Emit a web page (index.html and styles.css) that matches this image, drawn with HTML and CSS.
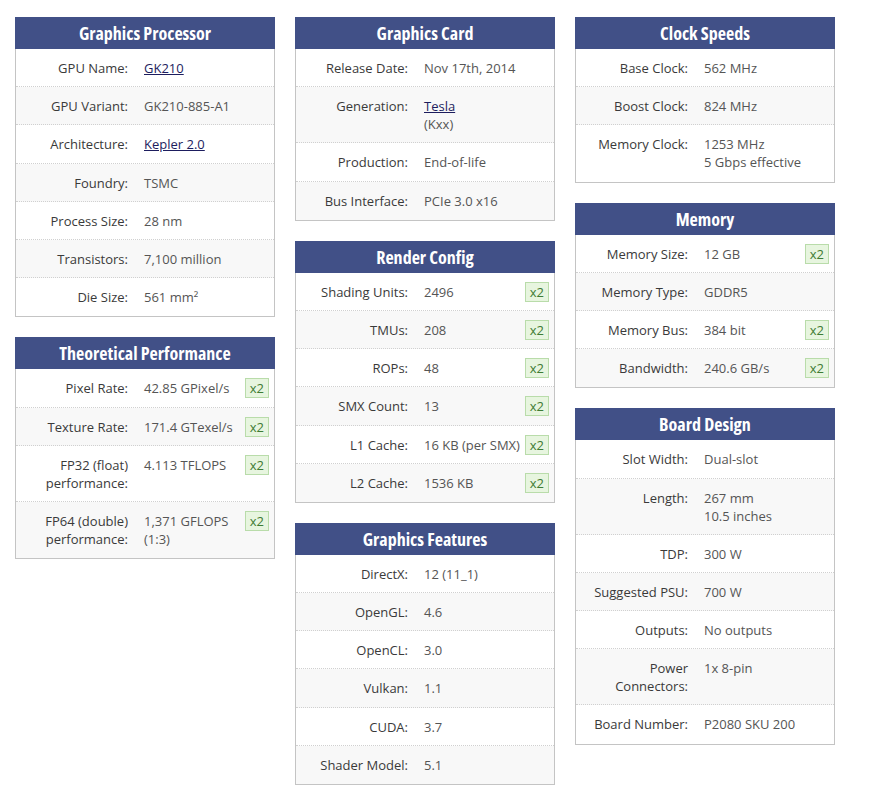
FILE: index.html
```html
<!DOCTYPE html>
<html>
<head>
<meta charset="utf-8">
<link rel="stylesheet" href="styles.css">
</head>
<body>
<div class="page">
  <div class="col">
    <section class="card">
      <h2 class="card-title">Graphics Processor</h2>
      <div class="row"><div class="label">GPU Name:</div><div class="value"><a href="#">GK210</a></div></div>
      <div class="row"><div class="label">GPU Variant:</div><div class="value">GK210-885-A1</div></div>
      <div class="row"><div class="label">Architecture:</div><div class="value"><a href="#">Kepler 2.0</a></div></div>
      <div class="row"><div class="label">Foundry:</div><div class="value">TSMC</div></div>
      <div class="row"><div class="label">Process Size:</div><div class="value">28 nm</div></div>
      <div class="row"><div class="label">Transistors:</div><div class="value">7,100 million</div></div>
      <div class="row"><div class="label">Die Size:</div><div class="value">561 mm²</div></div>
    </section>
    <section class="card">
      <h2 class="card-title">Theoretical Performance</h2>
      <div class="row"><div class="label">Pixel Rate:</div><div class="value">42.85 GPixel/s</div><span class="badge">x2</span></div>
      <div class="row"><div class="label">Texture Rate:</div><div class="value">171.4 GTexel/s</div><span class="badge">x2</span></div>
      <div class="row"><div class="label">FP32 (float)<br>performance:</div><div class="value">4.113 TFLOPS</div><span class="badge">x2</span></div>
      <div class="row"><div class="label">FP64 (double)<br>performance:</div><div class="value">1,371 GFLOPS<br>(1:3)</div><span class="badge">x2</span></div>
    </section>
  </div>
  <div class="col">
    <section class="card">
      <h2 class="card-title">Graphics Card</h2>
      <div class="row"><div class="label">Release Date:</div><div class="value">Nov 17th, 2014</div></div>
      <div class="row"><div class="label">Generation:</div><div class="value"><a href="#">Tesla</a><br>(Kxx)</div></div>
      <div class="row"><div class="label">Production:</div><div class="value">End-of-life</div></div>
      <div class="row"><div class="label">Bus Interface:</div><div class="value">PCIe 3.0 x16</div></div>
    </section>
    <section class="card">
      <h2 class="card-title">Render Config</h2>
      <div class="row"><div class="label">Shading Units:</div><div class="value">2496</div><span class="badge">x2</span></div>
      <div class="row"><div class="label">TMUs:</div><div class="value">208</div><span class="badge">x2</span></div>
      <div class="row"><div class="label">ROPs:</div><div class="value">48</div><span class="badge">x2</span></div>
      <div class="row"><div class="label">SMX Count:</div><div class="value">13</div><span class="badge">x2</span></div>
      <div class="row"><div class="label">L1 Cache:</div><div class="value">16 KB (per SMX)</div><span class="badge">x2</span></div>
      <div class="row"><div class="label">L2 Cache:</div><div class="value">1536 KB</div><span class="badge">x2</span></div>
    </section>
    <section class="card">
      <h2 class="card-title">Graphics Features</h2>
      <div class="row"><div class="label">DirectX:</div><div class="value">12 (11_1)</div></div>
      <div class="row"><div class="label">OpenGL:</div><div class="value">4.6</div></div>
      <div class="row"><div class="label">OpenCL:</div><div class="value">3.0</div></div>
      <div class="row"><div class="label">Vulkan:</div><div class="value">1.1</div></div>
      <div class="row"><div class="label">CUDA:</div><div class="value">3.7</div></div>
      <div class="row"><div class="label">Shader Model:</div><div class="value">5.1</div></div>
    </section>
  </div>
  <div class="col">
    <section class="card">
      <h2 class="card-title">Clock Speeds</h2>
      <div class="row"><div class="label">Base Clock:</div><div class="value">562 MHz</div></div>
      <div class="row"><div class="label">Boost Clock:</div><div class="value">824 MHz</div></div>
      <div class="row"><div class="label">Memory Clock:</div><div class="value">1253 MHz<br>5 Gbps effective</div></div>
    </section>
    <section class="card">
      <h2 class="card-title">Memory</h2>
      <div class="row"><div class="label">Memory Size:</div><div class="value">12 GB</div><span class="badge">x2</span></div>
      <div class="row"><div class="label">Memory Type:</div><div class="value">GDDR5</div></div>
      <div class="row"><div class="label">Memory Bus:</div><div class="value">384 bit</div><span class="badge">x2</span></div>
      <div class="row"><div class="label">Bandwidth:</div><div class="value">240.6 GB/s</div><span class="badge">x2</span></div>
    </section>
    <section class="card">
      <h2 class="card-title">Board Design</h2>
      <div class="row"><div class="label">Slot Width:</div><div class="value">Dual-slot</div></div>
      <div class="row"><div class="label">Length:</div><div class="value">267 mm<br>10.5 inches</div></div>
      <div class="row"><div class="label">TDP:</div><div class="value">300 W</div></div>
      <div class="row"><div class="label">Suggested PSU:</div><div class="value">700 W</div></div>
      <div class="row"><div class="label">Outputs:</div><div class="value">No outputs</div></div>
      <div class="row"><div class="label">Power<br>Connectors:</div><div class="value">1x 8-pin</div></div>
      <div class="row"><div class="label">Board Number:</div><div class="value">P2080 SKU 200</div></div>
    </section>
  </div>
</div>
</body>
</html>
```
FILE: styles.css
```css
html, body {
  margin: 0;
  padding: 0;
  background: #fff;
}
body {
  font-family: "Open Sans", "DejaVu Sans", sans-serif;
  font-size: 13px;
  color: #555;
}
.page {
  display: flex;
  align-items: flex-start;
  gap: 20px;
  padding: 17px 15px;
}
.col {
  width: 260px;
  display: flex;
  flex-direction: column;
  gap: 20px;
}
.card {
  border: 1px solid #c4c4c4;
  border-top: 0;
  background: #fff;
}
.card-title {
  margin: 0 -1px;
  height: 32px;
  line-height: 33px;
  background: #415087;
  color: #fff;
  text-align: center;
  font-family: "Open Sans", sans-serif;
  font-stretch: 75%;
  font-weight: 700;
  font-size: 18px;
}
.row {
  display: flex;
  align-items: flex-start;
  padding: 10px 5px 9.2px 0;
  line-height: 18px;
  border-bottom: 1px dotted #d0d0d0;
}
.row:nth-of-type(even) {
  background: #f8f8f8;
}
.row:last-child {
  border-bottom-color: transparent;
}
.label {
  flex: 0 0 128px;
  box-sizing: border-box;
  padding-right: 16px;
  text-align: right;
  color: #3a3a3a;
}
.value {
  flex: 1;
  color: #555;
}
.value a {
  color: #1d1d5e;
  text-decoration: underline;
}
.badge {
  margin: -1px 0 -2px;
  padding: 0 4px;
  line-height: 18px;
  border: 1px solid #b9dcaa;
  background: #e7f5df;
  color: #3f7c34;
  font-size: 13px;
}
```
